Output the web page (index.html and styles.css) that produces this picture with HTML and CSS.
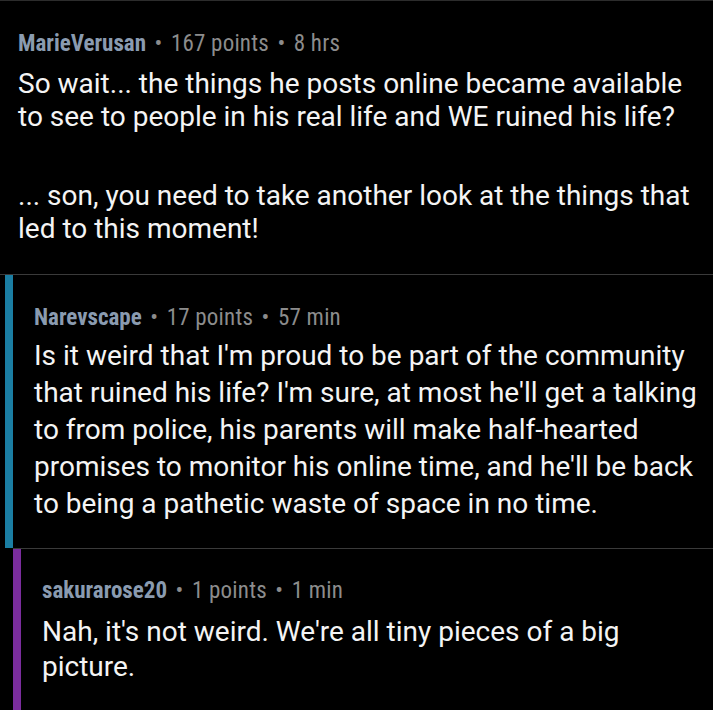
FILE: index.html
```html
<!DOCTYPE html>
<html lang="en">
  <head>
    <meta charset="UTF-8" />
    <meta name="viewport" content="width=device-width, initial-scale=1.0" />
    <title>Comments</title>
    <link rel="stylesheet" href="styles.css">
  </head>
  <body>
    <div class="thread">
      <div class="comment top">
        <div class="meta">
          <span class="author">MarieVerusan</span> <span class="dot">&bull;</span> 167 points <span class="dot">&bull;</span> 8 hrs
        </div>
        <p class="body">So wait... the things he posts online became available to see to people in his real life and WE ruined his life?</p>
        <p class="body">... son, you need to take another look at the things that led to this moment!</p>
      </div>

      <div class="replies">
        <div class="comment reply depth1">
          <div class="meta">
            <span class="author">Narevscape</span> <span class="dot">&bull;</span> 17 points <span class="dot">&bull;</span> 57 min
          </div>
          <p class="body">Is it weird that I'm proud to be part of the community that ruined his life? I'm sure, at most he'll get a talking to from police, his parents will make half-hearted promises to monitor his online time, and he'll be back to being a pathetic waste of space in no time.</p>
        </div>

        <div class="nested">
          <div class="comment reply depth2">
            <div class="meta">
              <span class="author">sakurarose20</span> <span class="dot">&bull;</span> 1 points <span class="dot">&bull;</span> 1 min
            </div>
            <p class="body">Nah, it's not weird. We're all tiny pieces of a big picture.</p>
          </div>
        </div>
      </div>
    </div>
  </body>
</html>
```

FILE: styles.css
```css
body {
  margin: 0;
  background-color: #000000;
  color: #ffffff;
  font-family: Roboto, "Noto Sans", sans-serif;
  height: 710px;
  overflow: hidden;
}

.thread {
  border-top: 1px solid #2c2c2c;
}

.meta {
  font-size: 23px;
  line-height: 28px;
  font-stretch: condensed;
  letter-spacing: 0.2px;
  color: #8c8c8c;
}

.author {
  font-weight: bold;
  letter-spacing: 0;
  color: #8a9bb0;
}

.dot {
  margin: 0 3px;
}

.body {
  margin: 0;
  font-size: 28px;
  color: #f4f4f4;
}

.comment.top {
  padding: 29px 8px 29px 18px;
}

.comment.top .meta {
  margin-bottom: 9px;
}

.comment.top .body {
  line-height: 33px;
}

.comment.top .body + .body {
  margin-top: 46px;
}

.replies {
  border-top: 1px solid #3a3a3a;
}

.reply {
  padding-left: 21px;
  padding-right: 8px;
}

.depth1 {
  margin-left: 5px;
  border-left: 8px solid #1b7ea3;
  padding-top: 29px;
  padding-bottom: 26px;
}

.depth1 .meta {
  margin-bottom: 5px;
}

.depth1 .body {
  line-height: 37px;
}

.nested {
  margin-left: 13px;
  border-top: 1px solid #3a3a3a;
}

.depth2 {
  border-left: 8px solid #7b2d9e;
  padding-top: 28px;
  padding-bottom: 60px;
}

.depth2 .meta {
  margin-bottom: 9px;
}

.depth2 .body {
  line-height: 35px;
}
```
